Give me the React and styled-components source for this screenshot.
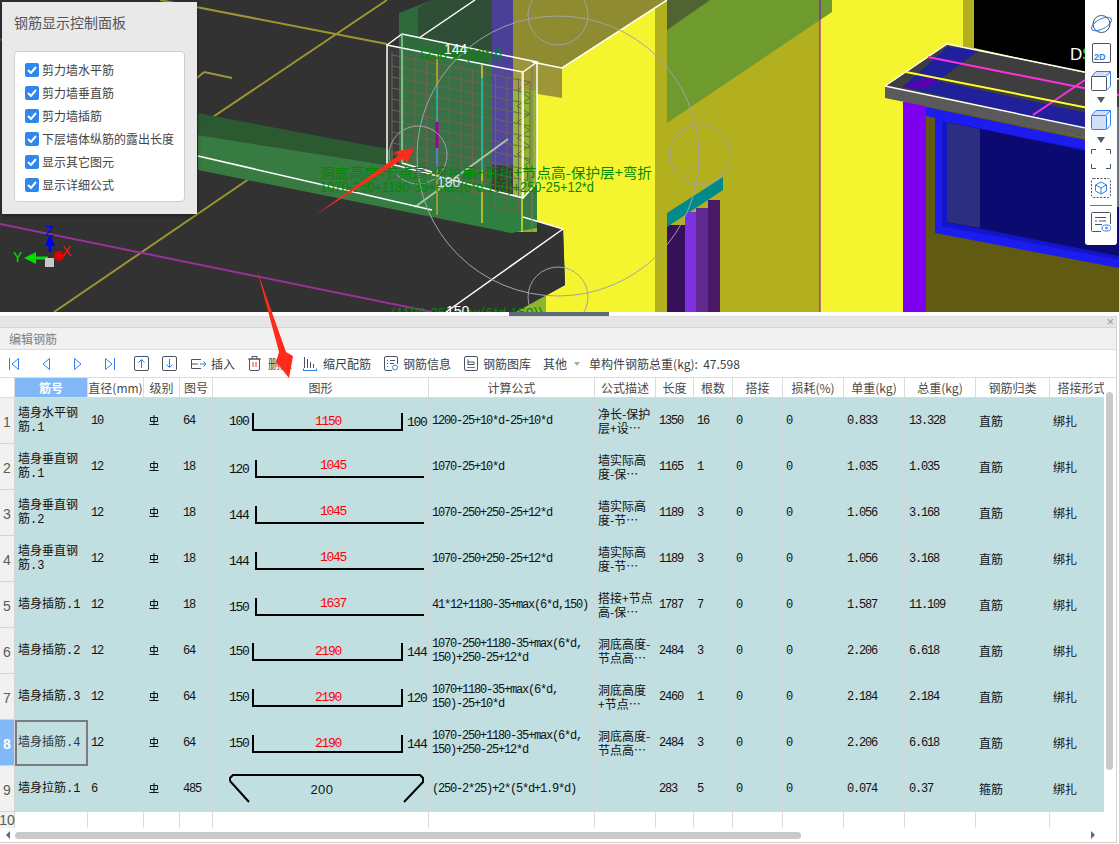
import styled, { createGlobalStyle } from 'styled-components'

const GlobalStyle = createGlobalStyle`
    html, body {
        margin: 0;
        padding: 0;
        background: #fff;
    }
    body {
        font-family: "Noto Sans CJK SC", "Liberation Sans", sans-serif;
        font-size: 12px;
        color: #333;
    }
`

const COLUMNS = '15px 73px 56px 36px 33px 216px 166px 61px 38px 39px 50px 61px 61px 71px 74px 64px'
const CJK_MONO = '"Liberation Mono", "Noto Sans CJK SC", monospace'

const Page = styled.div`
    position: relative;
    width: 1119px;
    height: 844px;
    overflow: hidden;
    display: flex;
    flex-direction: column;
`

// 3d view
const Viewport = styled.div`
    position: relative;
    height: 312px;
    flex: none;
    overflow: hidden;
    background: #323232;
`
const SceneSvg = styled.svg`
    display: block;
`
const ControlPanel = styled.div`
    position: absolute;
    left: 2px;
    top: 2px;
    width: 195px;
    height: 212px;
    box-sizing: border-box;
    padding: 12px 12px 0 12px;
    background: #e9e9e9;
    box-shadow: 0 1px 4px rgba(0, 0, 0, 0.45);
`
const PanelTitle = styled.div`
    font-size: 14px;
    line-height: 16px;
    color: #555;
`
const CheckList = styled.div`
    margin-top: 21px;
    width: 171px;
    height: 151px;
    box-sizing: border-box;
    padding: 6px 0 0 10px;
    display: flex;
    flex-direction: column;
    background: #fff;
    border: 1px solid #cfcfcf;
    border-radius: 4px;
`
const CheckRow = styled.label`
    height: 23px;
    display: flex;
    align-items: center;
    gap: 3px;
    font-size: 12px;
    color: #444;
    white-space: nowrap;
`
const CheckBox = styled.span`
    width: 14px;
    height: 14px;
    flex: none;
    border-radius: 2px;
    background: #2f86ec;
    display: flex;
    align-items: center;
    justify-content: center;
`
const SideTools = styled.div`
    position: absolute;
    top: 0;
    left: 1085px;
    width: 32px;
    height: 245px;
    box-sizing: border-box;
    padding-top: 14px;
    display: flex;
    flex-direction: column;
    align-items: center;
    background: #fff;
    border-radius: 0 0 3px 3px;
`
const SideSlot = styled.div`
    margin-top: ${p => p.$top || 0}px;
    display: flex;
    line-height: 0;
`
const SideRule = styled.div`
    width: 22px;
    height: 1px;
    margin-top: 7px;
    background: #777;
`
const SideRail = styled.div`
    position: absolute;
    left: 1117px;
    top: 107px;
    width: 2px;
    height: 100px;
    background: #6b7280;
`

// splitter
const Splitter = styled.div`
    height: 4px;
    flex: none;
    background: #fff;
    display: flex;
    padding-left: 509px;
`
const SplitHandle = styled.div`
    width: 100px;
    height: 4px;
    background: #5f6b79;
`

// editor
const Editor = styled.section`
    flex: none;
    width: 1117px;
    height: 527px;
    box-sizing: border-box;
    border-right: 1px solid #d2d2d2;
    border-bottom: 1px solid #d2d2d2;
    display: flex;
    flex-direction: column;
`
const GreyStrip = styled.div`
    position: relative;
    height: 10px;
    flex: none;
    background: #e6e6e6;
    border-top: 1px solid #dcdcdc;
    border-bottom: 1px solid #d6d6d6;
`
const CloseMark = styled.span`
    position: absolute;
    right: 2px;
    top: -1px;
    font-size: 13px;
    line-height: 12px;
    color: #9a9a9a;
    font-family: "Liberation Sans", sans-serif;
`
const TitleBar = styled.div`
    height: 21px;
    flex: none;
    padding-left: 9px;
    display: flex;
    align-items: center;
    background: #f1f1f1;
    border-bottom: 1px solid #dadada;
    font-size: 12px;
    color: #808080;
`
const Toolbar = styled.div`
    height: 27px;
    flex: none;
    padding-left: 9px;
    display: flex;
    align-items: center;
    background: #fff;
    white-space: nowrap;
    color: #3a3f47;
`
const NavGroup = styled.div`
    display: flex;
    align-items: center;
    gap: 22px;
    margin-right: 19px;
`
const BoxGroup = styled.div`
    display: flex;
    align-items: center;
    gap: 13px;
`
const ToolAction = styled.span`
    display: inline-flex;
    align-items: center;
    margin-left: ${p => p.$left || 0}px;
    gap: ${p => p.$gap || 6}px;
    line-height: 16px;
`
const MoreCaret = styled.span`
    width: 0;
    height: 0;
    margin-left: 7px;
    border-left: 3px solid transparent;
    border-right: 3px solid transparent;
    border-top: 4px solid #aaa;
`
const TotalWeight = styled.span`
    margin-left: 9px;
    white-space: pre;
`
const TableWrap = styled.div`
    flex: 1;
    min-height: 0;
    display: flex;
    border-top: 1px solid #dcdcdc;
`
const TableArea = styled.div`
    width: 1104px;
    flex: none;
    overflow: hidden;
`
const HeaderRow = styled.div`
    display: grid;
    grid-template-columns: ${COLUMNS};
    height: 20px;
`
const HeaderCell = styled.div`
    box-sizing: border-box;
    display: flex;
    align-items: center;
    justify-content: center;
    white-space: nowrap;
    overflow: hidden;
    font-size: 12px;
    color: ${p => (p.$active ? '#fff' : '#4a4a4a')};
    font-weight: ${p => (p.$active ? 700 : 400)};
    background: ${p => (p.$active ? '#80b8f8' : '#fff')};
    border-right: 1px solid #dcdcdc;
    border-bottom: 1px solid #dcdcdc;
`
const DataRow = styled.div`
    display: grid;
    grid-template-columns: ${COLUMNS};
    height: ${p => p.$height || 46}px;
`
const RowNumber = styled.div`
    box-sizing: border-box;
    display: flex;
    align-items: center;
    justify-content: center;
    padding-top: 2px;
    font-family: "Liberation Sans", sans-serif;
    font-size: 14px;
    font-weight: ${p => (p.$active ? 700 : 400)};
    color: ${p => (p.$active ? '#fff' : '#5c5a52')};
    background: ${p => (p.$active ? '#80b8f8' : '#f1f1f1')};
    border-right: 1px solid #d4d4d4;
    border-bottom: 1px solid #d4d4d4;
`
const Cell = styled.div`
    box-sizing: border-box;
    display: flex;
    align-items: center;
    padding-left: 3px;
    overflow: hidden;
    white-space: pre-line;
    line-height: 14px;
    font-size: 12px;
    color: #111;
    background: #c1dee0;
    border-right: 1px solid #d6d6d6;
    border-bottom: 1px solid #d6d6d6;
`
const NameCell = styled(Cell)`
    font-family: ${CJK_MONO};
    ${p => p.$selected && 'border: 2px solid #7c7c7c; padding-left: 1px; color: #2a3a44;'}
`
const MonoCell = styled(Cell)`
    font-family: "Liberation Mono", monospace;
    letter-spacing: -1.2px;
    padding-left: ${p => p.$pad || 3}px;
`
const ShapeCell = styled(Cell)`
    padding: 0;
`
const GradeCell = styled(Cell)`
    padding-left: 5px;
`
const EmptyCell = styled.div`
    box-sizing: border-box;
    border-right: 1px solid #dcdcdc;
`
const EmptyNumber = styled(RowNumber)`
    border-bottom: none;
    align-items: flex-start;
    padding-top: 0;
    background: #f1f1f1;
`
const VScroll = styled.div`
    flex: 1;
    padding: 14px 3px 0 2px;
`
const VThumb = styled.div`
    height: 378px;
    border-radius: 4px;
    background: #c9c9c9;
`
const HScroll = styled.div`
    height: 14px;
    flex: none;
    display: flex;
    align-items: center;
    padding: 0 21px 0 6px;
    gap: 5px;
`
const ArrowLeft = styled.span`
    width: 0;
    height: 0;
    border-top: 4px solid transparent;
    border-bottom: 4px solid transparent;
    border-right: 4px solid #5f6b79;
`
const ArrowRight = styled(ArrowLeft)`
    border-right: none;
    border-left: 4px solid #5f6b79;
    margin-left: auto;
`
const HThumb = styled.div`
    width: 786px;
    height: 7px;
    border-radius: 4px;
    background: #c9c9c9;
`
const ArrowOverlay = styled.svg`
    position: absolute;
    left: 0;
    top: 0;
    pointer-events: none;
`

const CHECK_ITEMS = ['剪力墙水平筋', '剪力墙垂直筋', '剪力墙插筋', '下层墙体纵筋的露出长度', '显示其它图元', '显示详细公式']

const HEADERS = ['', '筋号', '直径(mm)', '级别', '图号', '图形', '计算公式', '公式描述', '长度', '根数', '搭接', '损耗(%)', '单重(kg)', '总重(kg)', '钢筋归类', '搭接形式']

const ROWS = [
    { name: '墙身水平钢\n筋.1', d: '10', no: '64', shape: { type: 'u', left: '100', mid: '1150', right: '100' }, formula: '1200-25+10*d-25+10*d', desc: '净长-保护\n层+设…', len: '1350', count: '16', unit: '0.833', total: '13.328', kind: '直筋' },
    { name: '墙身垂直钢\n筋.1', d: '12', no: '18', shape: { type: 'l', left: '120', mid: '1045' }, formula: '1070-25+10*d', desc: '墙实际高\n度-保…', len: '1165', count: '1', unit: '1.035', total: '1.035', kind: '直筋' },
    { name: '墙身垂直钢\n筋.2', d: '12', no: '18', shape: { type: 'l', left: '144', mid: '1045' }, formula: '1070-250+250-25+12*d', desc: '墙实际高\n度-节…', len: '1189', count: '3', unit: '1.056', total: '3.168', kind: '直筋' },
    { name: '墙身垂直钢\n筋.3', d: '12', no: '18', shape: { type: 'l', left: '144', mid: '1045' }, formula: '1070-250+250-25+12*d', desc: '墙实际高\n度-节…', len: '1189', count: '3', unit: '1.056', total: '3.168', kind: '直筋' },
    { name: '墙身插筋.1', d: '12', no: '18', shape: { type: 'l', left: '150', mid: '1637' }, formula: '41*12+1180-35+max(6*d,150)', desc: '搭接+节点\n高-保…', len: '1787', count: '7', unit: '1.587', total: '11.109', kind: '直筋' },
    { name: '墙身插筋.2', d: '12', no: '64', shape: { type: 'u', left: '150', mid: '2190', right: '144' }, formula: '1070-250+1180-35+max(6*d,\n150)+250-25+12*d', desc: '洞底高度-\n节点高…', len: '2484', count: '3', unit: '2.206', total: '6.618', kind: '直筋' },
    { name: '墙身插筋.3', d: '12', no: '64', shape: { type: 'u', left: '150', mid: '2190', right: '120' }, formula: '1070+1180-35+max(6*d,\n150)-25+10*d', desc: '洞底高度\n+节点…', len: '2460', count: '1', unit: '2.184', total: '2.184', kind: '直筋' },
    { name: '墙身插筋.4', d: '12', no: '64', shape: { type: 'u', left: '150', mid: '2190', right: '144' }, formula: '1070-250+1180-35+max(6*d,\n150)+250-25+12*d', desc: '洞底高度-\n节点高…', len: '2484', count: '3', unit: '2.206', total: '6.618', kind: '直筋', selected: true },
    { name: '墙身拉筋.1', d: '6', no: '485', shape: { type: 'hook', mid: '200' }, formula: '(250-2*25)+2*(5*d+1.9*d)', desc: '', len: '283', count: '5', unit: '0.074', total: '0.37', kind: '箍筋' },
]

const BLUE = '#2f80ed'
const SLATE = '#4a5361'

function RebarShape({ shape }) {
    const mono = { fontFamily: '"Liberation Mono", monospace', fontSize: 13, letterSpacing: -1.3 }
    if (shape.type === 'hook') {
        return (
            <svg width="215" height="45" fill="none">
                <path d="M17 15 L17 12 L20 9 L207 9 L210 12 L210 16 L191 36 M17 15 L36 36" stroke="#000" strokeWidth="2" />
                <text x="109" y="28" textAnchor="middle" fill="#111" style={{ fontFamily: '"Liberation Sans", sans-serif', fontSize: 13, letterSpacing: 0.5 }}>{shape.mid}</text>
            </svg>
        )
    }
    if (shape.type === 'l') {
        return (
            <svg width="215" height="45" fill="none">
                <path d="M43 16 V33 H211" stroke="#000" strokeWidth="2" />
                <text x="16" y="29" fill="#111" style={mono}>{shape.left}</text>
                <text x="120" y="25" textAnchor="middle" fill="#f00" style={mono}>{shape.mid}</text>
            </svg>
        )
    }
    return (
        <svg width="215" height="45" fill="none">
            <path d="M40 15 V32 H189 V15" stroke="#000" strokeWidth="2" />
            <text x="16" y="27" fill="#111" style={mono}>{shape.left}</text>
            <text x="115" y="27" textAnchor="middle" fill="#f00" style={mono}>{shape.mid}</text>
            <text x="194" y="28" fill="#111" style={mono}>{shape.right}</text>
        </svg>
    )
}

function GradeMark() {
    return (
        <svg width="10" height="11" viewBox="0 0 10 11" fill="none" stroke="#111" strokeWidth="1">
            <path d="M1.5 2.5 H8.5 V6.5 H1.5 Z M5 0 V9.5 M0.5 9.5 H9.5" />
        </svg>
    )
}

function NavFirst() {
    return <svg width="10" height="14" fill="none" stroke={BLUE}><path d="M0.5 1 V13 M9.5 1.5 L3 7 L9.5 12.5 Z" /></svg>
}
function NavPrev() {
    return <svg width="10" height="14" fill="none" stroke={BLUE}><path d="M8.5 1.5 L2 7 L8.5 12.5 Z" /></svg>
}
function NavNext() {
    return <svg width="10" height="14" fill="none" stroke={BLUE}><path d="M1.5 1.5 L8 7 L1.5 12.5 Z" /></svg>
}
function NavLast() {
    return <svg width="10" height="14" fill="none" stroke={BLUE}><path d="M9.5 1 V13 M0.5 1.5 L7 7 L0.5 12.5 Z" /></svg>
}
function MoveBox({ down }) {
    return (
        <svg width="15" height="15" fill="none">
            <rect x="0.5" y="0.5" width="14" height="14" rx="1.5" stroke={SLATE} />
            <path d={down ? 'M7.5 3 V11.5 M4.5 8.5 L7.5 11.5 L10.5 8.5' : 'M7.5 12 V3.5 M4.5 6.5 L7.5 3.5 L10.5 6.5'} stroke={BLUE} />
        </svg>
    )
}
function InsertIcon() {
    return (
        <svg width="16" height="14" fill="none">
            <path d="M10 2.5 H0.5 V11.5 H10" stroke={SLATE} />
            <path d="M0.5 7 H7" stroke={SLATE} />
            <path d="M9 7 H15 M12.5 4.5 L15 7 L12.5 9.5" stroke={BLUE} />
        </svg>
    )
}
function TrashIcon() {
    return (
        <svg width="13" height="15" fill="none">
            <path d="M1.5 3 H11.5 V13 Q11.5 14.5 10 14.5 H3 Q1.5 14.5 1.5 13 Z M0 3 H13 M4 3 V0.5 H9 V3" stroke={SLATE} />
            <path d="M5 6 V11 M8 6 V11" stroke="#e33" />
        </svg>
    )
}
function RulerIcon() {
    return (
        <svg width="14" height="16" fill="none">
            <path d="M1.5 1 V12 M4.5 3 V12 M7.5 6 V12 M10.5 8 V12" stroke={SLATE} />
            <path d="M0 14.5 H14 M0.5 12.5 V15 M13.5 12.5 V15" stroke={BLUE} />
        </svg>
    )
}
function InfoIcon() {
    return (
        <svg width="14" height="15" fill="none">
            <path d="M8 14.5 H2 Q0.5 14.5 0.5 13 V2 Q0.5 0.5 2 0.5 H12 Q13.5 0.5 13.5 2 V8" stroke={SLATE} />
            <path d="M3 4.5 H4 M6 4.5 H11 M3 7.5 H4 M6 7.5 H10 M3 10.5 H4" stroke={SLATE} />
            <circle cx="11" cy="11.5" r="2.5" stroke={BLUE} />
        </svg>
    )
}
function LibraryIcon() {
    return (
        <svg width="14" height="15" fill="none">
            <rect x="0.5" y="0.5" width="13" height="14" rx="1.5" stroke={SLATE} />
            <path d="M4 3.5 V8.5 H10 V6 H4" stroke={SLATE} />
            <path d="M3 11.5 H11" stroke={BLUE} />
        </svg>
    )
}

function OrbitIcon() {
    return (
        <svg width="23" height="20" viewBox="0 0 23 20" fill="none">
            <circle cx="11.5" cy="10" r="8.5" stroke={SLATE} />
            <ellipse cx="11.5" cy="10" rx="11" ry="5" transform="rotate(-28 11.5 10)" stroke={BLUE} />
        </svg>
    )
}
function TwoDIcon() {
    return (
        <svg width="19" height="20" fill="none">
            <rect x="0.5" y="0.5" width="18" height="19" rx="1.5" stroke={SLATE} />
            <text x="2" y="17" fill={BLUE} style={{ fontFamily: '"Liberation Sans", sans-serif', fontSize: 9, fontWeight: 700 }}>2D</text>
        </svg>
    )
}
function CubeIcon({ filled }) {
    return (
        <svg width="20" height="20" fill="none">
            <path d="M0.5 5.5 L5 0.5 H19.5 L15 5.5 Z" fill="#cfe0f8" stroke={BLUE} />
            <path d="M19.5 0.5 V15 L15.5 19.5" stroke={BLUE} />
            <rect x="0.5" y="5.5" width="15" height="14" rx="1" fill={filled ? '#cfe0f8' : '#fff'} stroke={filled ? BLUE : SLATE} />
        </svg>
    )
}
function CaretIcon() {
    return (
        <svg width="8" height="6"><path d="M0 0 H8 L4 6 Z" fill="#555c66" /></svg>
    )
}
function CornersIcon() {
    return (
        <svg width="20" height="20" fill="none" stroke={SLATE}>
            <path d="M0.5 5 V0.5 H5 M15 0.5 H19.5 V5 M19.5 15 V19.5 H15 M5 19.5 H0.5 V15" />
        </svg>
    )
}
function DashedCubeIcon() {
    return (
        <svg width="20" height="20" fill="none">
            <rect x="0.5" y="0.5" width="19" height="19" rx="2" stroke={SLATE} strokeDasharray="2 1.5" />
            <path d="M10 4 L15.5 7 V13 L10 16 L4.5 13 V7 Z M4.5 7 L10 10 L15.5 7 M10 10 V16" stroke={BLUE} />
        </svg>
    )
}
function SheetEyeIcon() {
    return (
        <svg width="20" height="20" fill="none">
            <path d="M10 19.5 H1.5 Q0.5 19.5 0.5 18.5 V1.5 Q0.5 0.5 1.5 0.5 H18.5 Q19.5 0.5 19.5 1.5 V12" stroke={SLATE} />
            <path d="M4 5.5 H15 M4 9 H6 M8 9 H15 M4 12.5 H11" stroke={SLATE} />
            <ellipse cx="15.5" cy="16" rx="4.5" ry="3" stroke={BLUE} />
            <circle cx="15.5" cy="16" r="1.2" fill={BLUE} />
        </svg>
    )
}

function Scene() {
    const horizontals = Array.from({ length: 13 }, (_, i) => i)
    const verticals = Array.from({ length: 13 }, (_, i) => i)
    const greenText = { fontFamily: '"Noto Sans CJK SC", sans-serif', fontSize: 14 }
    const latinText = { fontFamily: '"Liberation Sans", sans-serif', fontSize: 14 }
    return (
        <SceneSvg width="1119" height="312" viewBox="0 0 1119 312" fill="none">
            {/* walls */}
            <polygon points="513,0 1119,0 1119,312 516,312 565,285 563,229 513,213" fill="#f5f52f" />
            <polygon points="495,312 514,300 514,312" fill="#4b3f98" />
            <polygon points="514,300 546,281 546,312 514,312" fill="#8db52e" />
            <rect x="655" y="0" width="12" height="312" fill="#b3b020" />
            <rect x="667" y="0" width="153" height="312" fill="#b3b020" />
            <rect x="820" y="0" width="143" height="312" fill="#f5f52f" />
            <polygon points="667,0 832,0 832,12 667,123" fill="#6f9a2e" />
            <polygon points="667,0 710,0 667,30" fill="#506332" />
            <rect x="819.5" y="0" width="1" height="312" fill="#8000c0" />
            <rect x="963" y="0" width="11" height="50" fill="#b3b020" />
            {/* teal lintel and purple opening */}
            <rect x="667" y="225" width="53" height="87" fill="#36105a" />
            <rect x="685" y="212" width="11" height="100" fill="#7f30e0" />
            <rect x="696" y="208" width="12" height="104" fill="#602a90" />
            <rect x="708" y="200" width="12" height="112" fill="#4a1a68" />
            <polygon points="667,213 723,177 723,190 667,227" fill="#008a8a" />
            {/* right building */}
            <polygon points="974,0 1119,0 1119,80 974,48" fill="#000" />
            <rect x="903" y="102" width="23" height="210" fill="#7f00f0" />
            <polygon points="926,105 1119,145 1119,312 926,312" fill="#615a12" />
            <polygon points="926,107 1119,147 1119,268 935,233 935,118 926,116" fill="#1c1cf0" />
            <polygon points="942,121 1119,156 1119,260 942,226" fill="#1414c8" />
            <polygon points="947,122 1119,158 1119,256 947,222" fill="#0a0a70" />
            <polygon points="947,122 980,129 980,228 947,222" fill="#2e2e80" />
            <polygon points="885,86 947,44 1119,80 1119,140 885,92" fill="#3e3e3e" />
            <polygon points="947,47 980,50 928,88 903,87" fill="#20209a" />
            <polygon points="915,76 1119,120 1119,137 903,87" fill="#20209a" />
            <polygon points="903,87 928,77 938,80 928,88" fill="#5a00b0" />
            <polygon points="885,86 1119,136 1119,145 885,98" fill="#5a5a5a" />
            <path d="M885 86 L947 44 L1119 79 M885 86 L1119 135" stroke="#fff" strokeWidth="1.5" />
            <path d="M928 57 L1119 95 M1033 115 L1085 80" stroke="#ff30e0" strokeWidth="2" />
            <path d="M906 72 L1119 114" stroke="#ffff30" strokeWidth="2" />
            {/* ground lines */}
            <path d="M160 0 L387 44 M387 0 L198 127 M262 170 L54 312 M204 72 L232 78 M204 72 L197 78" stroke="#9c9630" strokeWidth="2" />
            <path d="M0 224 L432 312 M0 40 L8 36" stroke="#9a309a" strokeWidth="2" />
            {/* green beam and wall */}
            <polygon points="198,113 393,150 393,166 198,135" fill="#2b5a31" />
            <polygon points="198,135 393,166 533,228 511,233 198,170" fill="#377a42" />
            <polygon points="399,13 432,0 492,0 492,190 399,170" fill="#2f6a3c" />
            <polygon points="418,38 475,0 432,0 418,8" fill="#2f4e36" />
            <polygon points="432,0 492,0 492,52 418,38" fill="#2f4e36" />
            <rect x="492" y="0" width="21" height="165" fill="#4b3f98" />
            <polygon points="513,0 667,0 562,68 513,57" fill="#8f8b30" />
            <polygon points="513,57 562,68 562,98 513,90" fill="#9c9638" />
            <rect x="513" y="90" width="24" height="142" fill="#8db52e" />
            <polygon points="387,163 523,198 537,183 537,228 511,233 387,204" fill="#2f7f40" />
            <polygon points="387,45 523,72 523,198 387,163" fill="rgba(255,255,255,0.05)" />
            {/* slab */}
            <polygon points="563,229 565,285 516,312 446,312" fill="#323232" />
            <path d="M563 229 L446 312 M563 229 L523 217" stroke="#fff" strokeWidth="1.5" />
            {/* rebar grid */}
            {horizontals.map(i => (
                <path key={i} d={`M392 ${55 + i * 11} L530 ${82 + i * 11}`} stroke="#6f6450" />
            ))}
            {verticals.map(i => (
                <path key={i} d={`M${392 + i * 11.5} ${52 + i * 2.4} V${170 + i * 4}`} stroke="#6f6450" />
            ))}
            <path d="M530 82 L517 90 L530 98 L517 106 L530 114 L517 122 L530 130 L517 138 L530 146 L517 154 L530 162 L517 170" stroke="#6f6450" />
            <path d="M532 62 V232" stroke="#7a7a60" />
            {/* colored bars */}
            <path d="M437 55 V85" stroke="#c0b020" strokeWidth="1.5" />
            <path d="M437 85 V122" stroke="#20c0b0" strokeWidth="1.5" />
            <path d="M437 122 V148" stroke="#a000a0" strokeWidth="3" />
            <path d="M437 148 V170" stroke="#4a80d0" strokeWidth="2" />
            <path d="M437 170 V215" stroke="#c0a030" strokeWidth="1.5" />
            <path d="M482 65 V78 M482 170 V223" stroke="#e0d020" strokeWidth="1.5" />
            <path d="M482 78 V170" stroke="#10d0c0" strokeWidth="1.5" />
            <path d="M522 72 V232" stroke="#e0e020" strokeWidth="1.5" />
            <path d="M508 139 L415 207" stroke="#a8c8a0" strokeWidth="2" />
            {/* wire box */}
            <path d="M387 45 L523 72 V198 L387 163 Z M387 45 L402 34 L537 62 L523 72 M419 38 L475 0 M537 62 V183 L523 198 M402 163 L432 172" stroke="#fff" strokeWidth="1.5" />
            <path d="M198 156 L432 210" stroke="#fff" strokeWidth="1.5" />
            <path d="M402 34 V163" stroke="#9cd0a0" strokeWidth="1.5" />
            {/* top slab edge */}
            <path d="M667 0 L562 68 L532 62" stroke="#fff" strokeWidth="1.5" />
            {/* construction circles */}
            <g stroke="#a2a2aa">
                <ellipse cx="558" cy="156" rx="141" ry="140" />
                <circle cx="418" cy="155" r="29" />
                <circle cx="700" cy="155" r="30" />
                <circle cx="558" cy="15" r="30" />
                <circle cx="558" cy="297" r="30" />
            </g>
            {/* labels */}
            <text x="320" y="178" fill="#008a00" style={greenText} textLength="332" lengthAdjust="spacingAndGlyphs">洞底高度-节点高-保护层+弯折+节点高-保护层+弯折</text>
            <text x="320" y="192" fill="#008a00" style={latinText} textLength="274" lengthAdjust="spacingAndGlyphs">1070-250+1180-35+max(6*d,150)+250-25+12*d</text>
            <text x="420" y="59" fill="#008a00" style={latinText} textLength="82" lengthAdjust="spacingAndGlyphs">(250*2*(12*d)</text>
            <text x="444" y="54" fill="#fff" style={latinText}>144</text>
            <text x="437" y="187" fill="#dde" style={latinText}>190</text>
            <text x="391" y="318" fill="#008a00" style={latinText}>(1180-35+max(6*d,150))</text>
            <text x="446" y="316" fill="#fff" style={latinText}>150</text>
            <text x="1070" y="60" fill="#fff" style={{ ...latinText, fontSize: 17 }}>D</text>
            <text x="1082" y="60" fill="#20e020" style={{ ...latinText, fontSize: 17 }}>S</text>
            {/* axis gizmo */}
            <path d="M50 252 V244" stroke="#0000ff" strokeWidth="3" />
            <polygon points="50,234 55,246 45,246" fill="#0000ff" />
            <polygon points="24,258 36,252 36,264" fill="#00e000" />
            <path d="M34 258 H48" stroke="#00e000" strokeWidth="3" />
            <circle cx="59" cy="256" r="5" fill="#e00000" />
            <rect x="45" y="258" width="9" height="9" fill="#c8c8c8" />
            <text x="45" y="236" fill="#0000ff" style={latinText}>Z</text>
            <text x="62" y="256" fill="#ff1010" style={latinText}>X</text>
            <text x="13" y="262" fill="#00e000" style={latinText}>Y</text>
        </SceneSvg>
    )
}

export default function App() {
    return (
        <Page>
            <GlobalStyle />
            <Viewport>
                <Scene />
                <ControlPanel>
                    <PanelTitle>钢筋显示控制面板</PanelTitle>
                    <CheckList>
                        {CHECK_ITEMS.map(item => (
                            <CheckRow key={item}>
                                <CheckBox>
                                    <svg width="10" height="8" fill="none"><path d="M1 4 L4 7 L9 1" stroke="#fff" strokeWidth="2" /></svg>
                                </CheckBox>
                                {item}
                            </CheckRow>
                        ))}
                    </CheckList>
                </ControlPanel>
                <SideTools>
                    <SideSlot><OrbitIcon /></SideSlot>
                    <SideSlot $top={9}><TwoDIcon /></SideSlot>
                    <SideSlot $top={8}><CubeIcon /></SideSlot>
                    <SideSlot $top={6}><CaretIcon /></SideSlot>
                    <SideSlot $top={7}><CubeIcon filled /></SideSlot>
                    <SideSlot $top={7}><CaretIcon /></SideSlot>
                    <SideSlot $top={6}><CornersIcon /></SideSlot>
                    <SideSlot $top={9}><DashedCubeIcon /></SideSlot>
                    <SideRule />
                    <SideSlot $top={6}><SheetEyeIcon /></SideSlot>
                </SideTools>
                <SideRail />
            </Viewport>
            <Splitter><SplitHandle /></Splitter>
            <Editor>
                <GreyStrip><CloseMark>×</CloseMark></GreyStrip>
                <TitleBar>编辑钢筋</TitleBar>
                <Toolbar>
                    <NavGroup>
                        <NavFirst />
                        <NavPrev />
                        <NavNext />
                        <NavLast />
                    </NavGroup>
                    <BoxGroup>
                        <MoveBox />
                        <MoveBox down />
                    </BoxGroup>
                    <ToolAction $left={14} $gap={4}><InsertIcon />插入</ToolAction>
                    <ToolAction $left={13} $gap={7}><TrashIcon />删除</ToolAction>
                    <ToolAction $left={11} $gap={6}><RulerIcon />缩尺配筋</ToolAction>
                    <ToolAction $left={13} $gap={5}><InfoIcon />钢筋信息</ToolAction>
                    <ToolAction $left={13} $gap={5}><LibraryIcon />钢筋图库</ToolAction>
                    <ToolAction $left={12}>其他</ToolAction>
                    <MoreCaret />
                    <TotalWeight>{'单构件钢筋总重(kg):  47.598'}</TotalWeight>
                </Toolbar>
                <TableWrap>
                    <TableArea>
                        <HeaderRow>
                            {HEADERS.map((title, i) => (
                                <HeaderCell key={i} $active={i === 1}>{title}</HeaderCell>
                            ))}
                        </HeaderRow>
                        {ROWS.map((row, i) => (
                            <DataRow key={i}>
                                <RowNumber $active={row.selected}>{i + 1}</RowNumber>
                                <NameCell $selected={row.selected}>{row.name}</NameCell>
                                <MonoCell>{row.d}</MonoCell>
                                <GradeCell><GradeMark /></GradeCell>
                                <MonoCell>{row.no}</MonoCell>
                                <ShapeCell><RebarShape shape={row.shape} /></ShapeCell>
                                <MonoCell>{row.formula}</MonoCell>
                                <Cell>{row.desc}</Cell>
                                <MonoCell>{row.len}</MonoCell>
                                <MonoCell>{row.count}</MonoCell>
                                <MonoCell $pad={3}>0</MonoCell>
                                <MonoCell $pad={3}>0</MonoCell>
                                <MonoCell $pad={3}>{row.unit}</MonoCell>
                                <MonoCell $pad={4}>{row.total}</MonoCell>
                                <Cell>{row.kind}</Cell>
                                <Cell>绑扎</Cell>
                            </DataRow>
                        ))}
                        <DataRow $height={16}>
                            <EmptyNumber>10</EmptyNumber>
                            {HEADERS.slice(1).map((_, i) => <EmptyCell key={i} />)}
                        </DataRow>
                    </TableArea>
                    <VScroll><VThumb /></VScroll>
                </TableWrap>
                <HScroll>
                    <ArrowLeft />
                    <HThumb />
                    <ArrowRight />
                </HScroll>
            </Editor>
            <ArrowOverlay width="1119" height="844">
                <polygon points="314,216 399,155 393,152 414,148 407,163 403,159" fill="#ff2a1a" />
                <polygon points="257,270 279,352 276,362 289,378 293,356 286,352" fill="#ff2a1a" />
            </ArrowOverlay>
        </Page>
    )
}
